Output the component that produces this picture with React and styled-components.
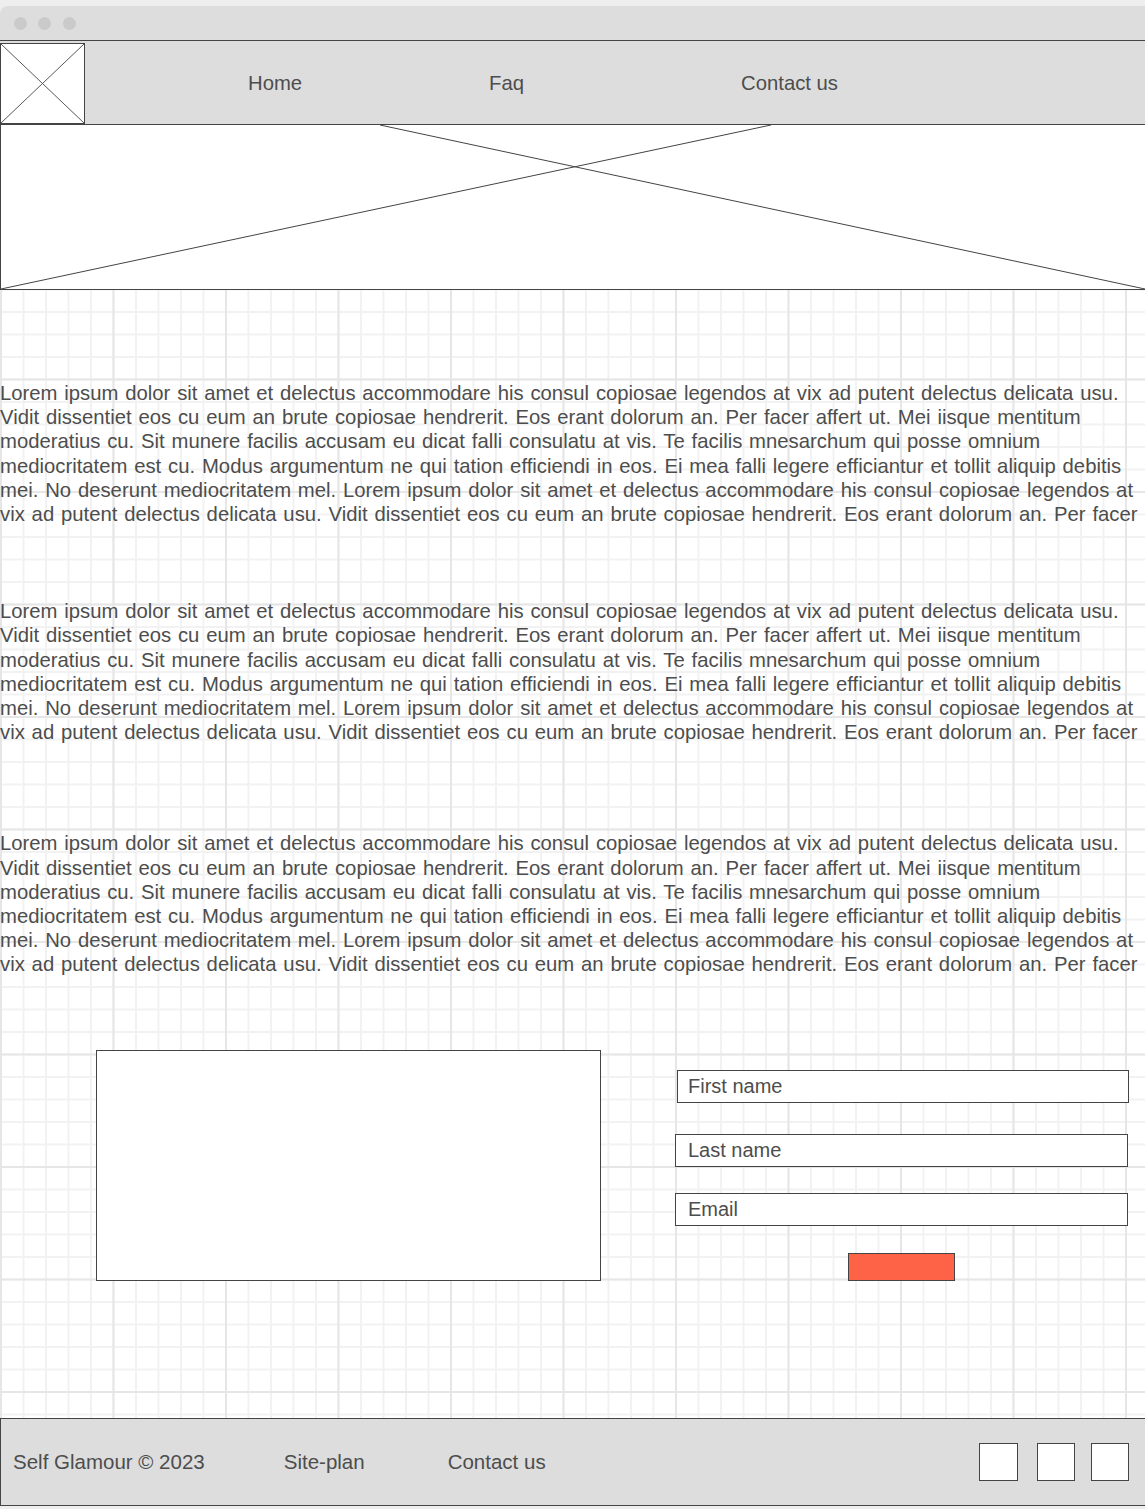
import React from "react";
import styled, { createGlobalStyle } from "styled-components";

const GlobalStyle = createGlobalStyle`
  html, body {
    margin: 0;
    padding: 0;
    background: #eeeeee;
    font-family: "Liberation Sans", Arial, sans-serif;
    color: #4d4d4d;
  }
`;

const Page = styled.div`
  width: 1145px;
  padding-top: 6px;
  padding-bottom: 4px;
  overflow: hidden;
`;

const Window = styled.div`
  width: 1160px;
  border-top-left-radius: 8px;
  overflow: hidden;
`;

const TitleBar = styled.div`
  height: 34px;
  background: #dddddd;
  display: flex;
  align-items: center;
  gap: 11.5px;
  padding-left: 13.5px;
`;

const Dot = styled.span`
  width: 13px;
  height: 13px;
  border-radius: 50%;
  background: #cacaca;
`;

const Body = styled.div`
  width: 1145px;
  background-color: #ffffff;
  background-image: linear-gradient(to right, #e6e6e6 2px, transparent 2px),
    linear-gradient(to bottom, #e6e6e6 2px, transparent 2px),
    linear-gradient(to right, #f2f2f2 2px, transparent 2px),
    linear-gradient(to bottom, #f2f2f2 2px, transparent 2px);
  background-size: 112.5px 112.5px, 112.5px 112.5px, 22.5px 22.5px,
    22.5px 22.5px;
  background-position: 0 1px, 0 1px, 0 1px, 0 1px;
`;

const Header = styled.header`
  height: 83px;
  background: #dddddd;
  border-top: 1px solid #444;
  border-bottom: 1px solid #444;
  display: flex;
  align-items: center;
`;

const Logo = styled.div`
  width: 85px;
  height: 81px;
  align-self: flex-end;
  background: #fff;
  border: 1px solid #444;
  box-sizing: border-box;
  display: flex;
  svg {
    width: 100%;
    height: 100%;
  }
`;

const NavLink = styled.a`
  margin-left: ${({ $offset }) => $offset}px;
  padding-top: 2px;
  font-size: 20.3px;
  color: #4d4d4d;
  text-decoration: none;
  white-space: nowrap;
`;

const Hero = styled.div`
  height: 164px;
  background: #fff;
  border-left: 1px solid #444;
  border-bottom: 1px solid #444;
  svg {
    display: block;
    width: 100%;
    height: 100%;
  }
`;

const Paragraph = styled.p`
  margin: ${({ $top }) => $top}px 0 0;
  font-size: 20.3px;
  line-height: 24.2px;
  word-spacing: 1.2px;
  color: #4d4d4d;
`;

const Line = styled.span`
  display: block;
  white-space: nowrap;
`;

const ContactRow = styled.section`
  display: flex;
  align-items: flex-start;
  margin-top: 73px;
  height: 368px;
`;

const MapBox = styled.div`
  width: 505px;
  height: 231px;
  margin-left: 96px;
  background: #fff;
  border: 1px solid #444;
  box-sizing: border-box;
`;

const Form = styled.form`
  width: 453px;
  margin-left: 74px;
  padding-top: 20px;
  display: flex;
  flex-direction: column;
`;

const Field = styled.input`
  width: ${({ $indent }) => ($indent ? 452 : 453)}px;
  height: 33px;
  box-sizing: border-box;
  margin: ${({ $gap }) => $gap}px 0 0 ${({ $indent }) => $indent || 0}px;
  padding: 0 12px 0 ${({ $indent }) => ($indent ? 10 : 12)}px;
  border: 1px solid #444;
  background: #fff;
  font-family: "Liberation Sans", Arial, sans-serif;
  font-size: 20px;
  outline: none;
  &::placeholder {
    color: #4d4d4d;
  }
`;

const Submit = styled.button`
  align-self: center;
  width: 107px;
  height: 28px;
  margin-top: 27px;
  background: #ff6347;
  border: 1px solid #444;
  box-sizing: border-box;
`;

const Footer = styled.footer`
  height: 86px;
  background: #dddddd;
  border-top: 1px solid #444;
  border-bottom: 1px solid #444;
  border-left: 1px solid #444;
  display: flex;
  align-items: center;
  font-size: 20.5px;
  color: #4d4d4d;
`;

const FooterText = styled.span`
  margin-left: ${({ $offset }) => $offset}px;
  white-space: nowrap;
`;

const Socials = styled.div`
  margin-left: auto;
  margin-right: 16px;
  display: flex;
`;

const Social = styled.div`
  width: ${({ $w }) => $w}px;
  height: 38px;
  margin-left: ${({ $gap }) => $gap || 0}px;
  background: #fff;
  border: 1px solid #444;
  box-sizing: border-box;
`;

const LOREM_LINES = [
  "Lorem ipsum dolor sit amet et delectus accommodare his consul copiosae legendos at vix ad putent delectus delicata usu.",
  "Vidit dissentiet eos cu eum an brute copiosae hendrerit. Eos erant dolorum an. Per facer affert ut. Mei iisque mentitum",
  "moderatius cu. Sit munere facilis accusam eu dicat falli consulatu at vis. Te facilis mnesarchum qui posse omnium",
  "mediocritatem est cu. Modus argumentum ne qui tation efficiendi in eos. Ei mea falli legere efficiantur et tollit aliquip debitis",
  "mei. No deserunt mediocritatem mel. Lorem ipsum dolor sit amet et delectus accommodare his consul copiosae legendos at",
  "vix ad putent delectus delicata usu. Vidit dissentiet eos cu eum an brute copiosae hendrerit. Eos erant dolorum an. Per facer",
];

const LoremBlock = ({ top }) => (
  <Paragraph $top={top}>
    {LOREM_LINES.map((line, i) => (
      <Line key={i}>{line}</Line>
    ))}
  </Paragraph>
);

const App = () => {
  return (
    <Page>
      <GlobalStyle />
      <Window>
        <TitleBar>
          <Dot />
          <Dot />
          <Dot />
        </TitleBar>
        <Body>
          <Header>
            <Logo>
              <svg viewBox="0 0 84 80" preserveAspectRatio="none">
                <line x1="0" y1="0" x2="84" y2="80" stroke="#555" strokeWidth="1" />
                <line x1="84" y1="0" x2="0" y2="80" stroke="#555" strokeWidth="1" />
              </svg>
            </Logo>
            <NavLink $offset={163}>Home</NavLink>
            <NavLink $offset={187}>Faq</NavLink>
            <NavLink $offset={217}>Contact us</NavLink>
          </Header>
          <Hero>
            <svg viewBox="0 0 1144 164" preserveAspectRatio="none">
              <line x1="379" y1="0" x2="1144" y2="164" stroke="#444" strokeWidth="1" />
              <line x1="770" y1="0" x2="0" y2="164" stroke="#444" strokeWidth="1" />
            </svg>
          </Hero>
          <LoremBlock top={91} />
          <LoremBlock top={73} />
          <LoremBlock top={87} />
          <ContactRow>
            <MapBox />
            <Form onSubmit={(e) => e.preventDefault()}>
              <Field placeholder="First name" $gap={0} $indent={2} />
              <Field placeholder="Last name" $gap={31} />
              <Field placeholder="Email" $gap={26} />
              <Submit type="submit" />
            </Form>
          </ContactRow>
          <Footer>
            <FooterText $offset={12}>Self Glamour © 2023</FooterText>
            <FooterText $offset={79}>Site-plan</FooterText>
            <FooterText $offset={83}>Contact us</FooterText>
            <Socials>
              <Social $w={39} />
              <Social $w={38} $gap={19} />
              <Social $w={38} $gap={16} />
            </Socials>
          </Footer>
        </Body>
      </Window>
    </Page>
  );
};

export default App;
